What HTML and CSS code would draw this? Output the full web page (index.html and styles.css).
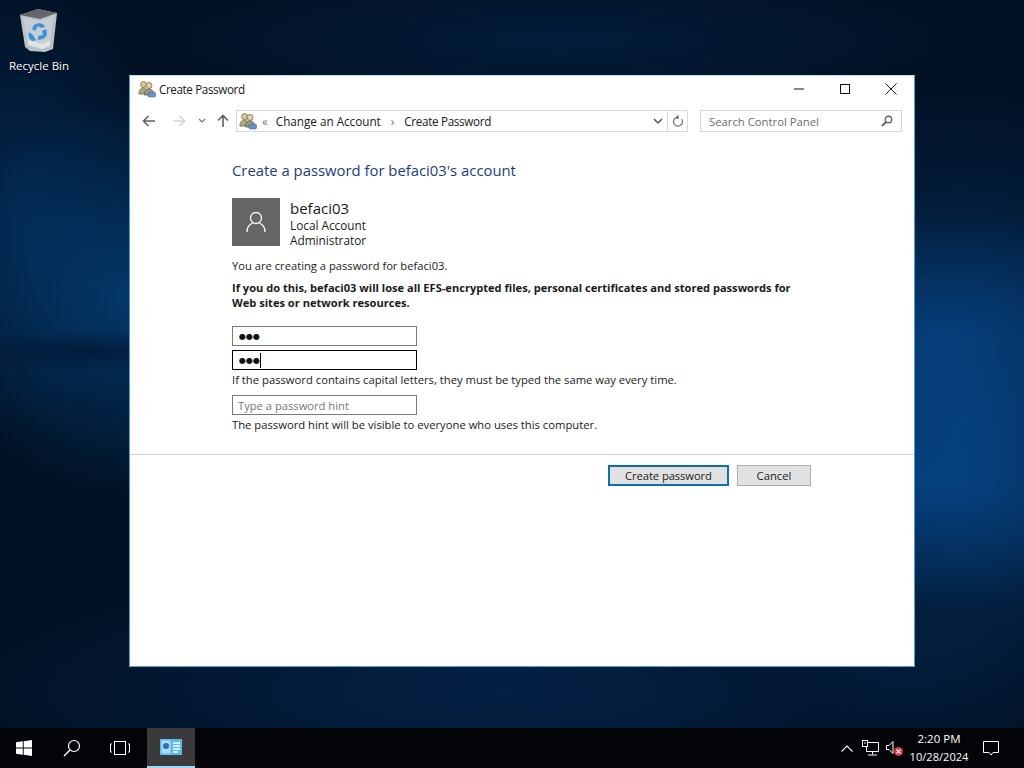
FILE: index.html
```html
<!DOCTYPE html>
<html lang="en">
<head>
<meta charset="utf-8">
<title>Create Password</title>
<link rel="stylesheet" href="styles.css">
</head>
<body>
<svg class="defs" width="0" height="0" aria-hidden="true">
  <symbol id="users" viewBox="0 0 18 18">
    <circle cx="5.500" cy="4.500" r="3" fill="#d8c9a0" stroke="#7d6a3a" stroke-width=".8"/>
    <path d="M1 14c0-4 1.500-6 4.500-6s4.500 2 4.500 6z" fill="#a5ab7c" stroke="#6a6a44" stroke-width=".8"/>
    <circle cx="11" cy="5.500" r="3" fill="#e4cfa4" stroke="#7d6a3a" stroke-width=".8"/>
    <path d="M6.500 15c0-4 1.500-6 4.500-6s4.500 2 4.500 6z" fill="#9a9b88" stroke="#55553f" stroke-width=".8"/>
    <rect x="10" y="12" width="7.500" height="5" rx="1.500" fill="#6f8fc0" stroke="#47659a" stroke-width=".6"/>
  </symbol>
</svg>
<main class="desktop">
  <div class="desk-icon">
    <svg class="bin" width="42" height="46" viewBox="0 0 42 46">
      <path d="M2 7 20 1 39 5 35 41 27 44 12 43 7 39z" fill="#b9c0c6"/>
      <path d="M2 7 20 1 39 5 22 11z" fill="#62676b"/>
      <path d="M5 9 22 13 35 8 32 38 24 41 10 37z" fill="#c6ced4"/>
      <path d="M16 17c5-3 10-2 11 2l-4 1-3-2-3 5-3-2zM11 24l4 3 3 5-3 1c-4-1-5-5-4-9zM28 21c2 4 1 8-3 10l-5 1v-4l5-1-1-4z" fill="#3a92dc"/>
      <path d="M10 32 24 36 32 33 32 38 24 41 10 37z" fill="#fff" opacity=".45"/>
    </svg>
    <span class="desk-label">Recycle Bin</span>
  </div>

  <section class="window">
    <header class="titlebar">
      <svg class="title-icon" width="18" height="18"><use href="#users"/></svg>
      <span class="title-text">Create Password</span>
      <div class="win-controls">
        <span class="win-btn"><svg width="12" height="12" viewBox="0 0 12 12"><path d="M1 6h10" stroke="#111" stroke-width="1"/></svg></span>
        <span class="win-btn"><svg width="12" height="12" viewBox="0 0 12 12"><rect x="1.500" y="1.500" width="9" height="9" fill="none" stroke="#111"/></svg></span>
        <span class="win-btn"><svg width="12" height="12" viewBox="0 0 12 12"><path d="M.5.5l11 11M11.500.5l-11 11" stroke="#111" fill="none"/></svg></span>
      </div>
    </header>

    <nav class="toolbar">
      <svg class="nav-back" width="14" height="12" viewBox="0 0 14 12"><path d="M13 6H2M6.500 1 1.500 6l5 5" fill="none" stroke="#5f5f5f" stroke-width="1.600"/></svg>
      <svg class="nav-fwd" width="14" height="12" viewBox="0 0 14 12"><path d="M1 6h11M7.500 1l5 5-5 5" fill="none" stroke="#d4d4d4" stroke-width="1.600"/></svg>
      <svg class="nav-drop" width="8" height="6" viewBox="0 0 8 6"><path d="M1 1l3 3 3-3" fill="none" stroke="#777" stroke-width="1.200"/></svg>
      <svg class="nav-up" width="12" height="14" viewBox="0 0 12 14"><path d="M6 13V2M1 6.500l5-5 5 5" fill="none" stroke="#5f5f5f" stroke-width="1.600"/></svg>
      <div class="address">
        <svg class="addr-icon" width="18" height="18"><use href="#users"/></svg>
        <span class="chev">«</span>
        <span class="crumb">Change an Account</span>
        <span class="sep">›</span>
        <span class="crumb crumb-last">Create Password</span>
        <svg class="addr-drop" width="10" height="7" viewBox="0 0 10 7"><path d="M1 1l4 4 4-4" fill="none" stroke="#555" stroke-width="1.500"/></svg>
        <span class="refresh"><svg width="12" height="13" viewBox="0 0 12 13"><path d="M9.700 4a4.500 4.500 0 1 1-2.700-1.800H4.500M6.500 .5l-2 1.700 2 1.700" fill="none" stroke="#666" stroke-width="1.100"/></svg></span>
      </div>
      <div class="search">
        <span class="search-text">Search Control Panel</span>
        <svg width="12" height="12" viewBox="0 0 12 12"><circle cx="7.500" cy="4.500" r="3.200" fill="none" stroke="#666" stroke-width="1.400"/><path d="M5 7 1 11" stroke="#666" stroke-width="2"/></svg>
      </div>
    </nav>

    <div class="content">
      <h1 class="heading">Create a password for befaci03's account</h1>
      <div class="account">
        <div class="avatar">
          <svg width="20" height="22" viewBox="0 0 20 22"><circle cx="10" cy="7" r="5.500" fill="none" stroke="#fff" stroke-width="1.300"/><path d="M1 21c0-5 3-8 6-9M19 21c0-5-3-8-6-9" fill="none" stroke="#fff" stroke-width="1.300"/></svg>
        </div>
        <div class="acc-info">
          <div class="acc-name">befaci03</div>
          <div class="acc-line">Local Account</div>
          <div class="acc-line">Administrator</div>
        </div>
      </div>
      <p class="intro">You are creating a password for befaci03.</p>
      <p class="warn">If you do this, befaci03 will lose all EFS-encrypted files, personal certificates and stored passwords for Web sites or network resources.</p>
      <div class="field first"><span class="dots">●●●</span></div>
      <div class="field focus"><span class="dots">●●●</span><span class="caret"></span></div>
      <p class="note">If the password contains capital letters, they must be typed the same way every time.</p>
      <div class="field hint">Type a password hint</div>
      <p class="note">The password hint will be visible to everyone who uses this computer.</p>
    </div>
    <div class="actions">
      <button class="btn primary">Create password</button>
      <button class="btn">Cancel</button>
    </div>
  </section>
</main>

<footer class="taskbar">
  <span class="tb-item">
    <svg width="16" height="16" viewBox="0 0 16 16"><path d="M0 2.300 6.800 1.300V7.600H0zM7.700 1.200 16 0V7.600H7.700zM0 8.400H6.800V14.700L0 13.700zM7.700 8.400H16V16L7.700 14.800z" fill="#fff"/></svg>
  </span>
  <span class="tb-item">
    <svg width="18" height="18" viewBox="0 0 18 18"><circle cx="11" cy="7" r="5.500" fill="none" stroke="#fff" stroke-width="1.200"/><path d="M7 11 1 17" stroke="#fff" stroke-width="1.400"/></svg>
  </span>
  <span class="tb-item">
    <svg width="20" height="14" viewBox="0 0 20 14"><rect x="4.500" y=".5" width="11" height="13" fill="none" stroke="#fff"/><path d="M2 3H.5v8H2M18 3h1.500v8H18" fill="none" stroke="#fff"/></svg>
  </span>
  <span class="tb-item active">
    <svg width="22" height="16" viewBox="0 0 22 16"><rect width="22" height="16" fill="#5cb8ee"/><rect x="1.500" y="1.500" width="9" height="13" fill="#a9dcf7"/><circle cx="6" cy="7" r="3" fill="#2f6fa8"/><path d="M13 4h7M13 7h7M13 10h7M13 13h5" stroke="#fff" stroke-width="1.300"/></svg>
  </span>
  <div class="tray">
    <svg class="tray-up" width="12" height="7" viewBox="0 0 12 7"><path d="M.5 6.500 6 1l5.500 5.500" fill="none" stroke="#fff" stroke-width="1.100"/></svg>
    <svg class="tray-net" width="17" height="16" viewBox="0 0 17 16"><path d="M4.500 2.500h12v9h-12zM10.500 11.500v3M6 15h9" fill="none" stroke="#fff"/><rect x=".5" y=".5" width="5" height="6" fill="#000" stroke="#fff"/><path d="M2 3h2" stroke="#fff"/></svg>
    <span class="tray-vol">
      <svg width="18" height="17" viewBox="0 0 18 17"><path d="M.5 5.500h2.500L7 1.500v12l-4-4H.5z" fill="none" stroke="#fff"/><circle cx="12.500" cy="11.500" r="4.500" fill="#e0303f"/><path d="M10.500 9.500l4 4M14.500 9.500l-4 4" stroke="#fff" stroke-width="1.100"/></svg>
    </span>
    <div class="clock"><span>2:20 PM</span><span class="clock-date">10/28/2024</span></div>
    <svg class="tray-note" width="16" height="15" viewBox="0 0 16 15"><path d="M.5.5h15v11H10l-2 2.500-2-2.500H.5z" fill="none" stroke="#fff"/></svg>
  </div>
</footer>
</body>
</html>
```
FILE: styles.css
```css
* { box-sizing: border-box; }
html, body { margin: 0; height: 100%; overflow: hidden; }
body {
  display: flex;
  flex-direction: column;
  width: 1024px;
  height: 768px;
  font-family: "Open Sans", "Noto Sans", sans-serif;
  font-size: 11.25px;
  color: #1a1a1a;
  background: #000;
}
.defs { position: absolute; }
.desktop {
  position: relative;
  flex: 1;
  background:
    radial-gradient(ellipse 170px 22px at 90px 352px, rgba(1,18,42,.6), rgba(1,18,42,0) 100%),
    radial-gradient(ellipse 220px 200px at 140px 300px, rgba(4,72,135,.7), rgba(4,72,135,0) 100%),
    radial-gradient(ellipse 150px 220px at 20px 200px, rgba(3,52,104,.55), rgba(3,52,104,0) 100%),
    radial-gradient(ellipse 300px 130px at 940px 340px, rgba(8,86,165,.5), rgba(8,86,165,0) 100%),
    radial-gradient(ellipse 300px 130px at 940px 480px, rgba(8,86,165,.55), rgba(8,86,165,0) 100%),
    radial-gradient(ellipse 260px 340px at 960px 420px, rgba(5,60,120,.7), rgba(5,60,120,0) 100%),
    radial-gradient(ellipse 560px 130px at 500px 690px, rgba(6,52,110,.45), rgba(6,52,110,0) 100%),
    radial-gradient(ellipse 420px 70px at 560px 40px, rgba(5,50,100,.35), rgba(5,50,100,0) 100%),
    #021124;
}
.desk-icon {
  position: absolute;
  left: 0;
  top: 8px;
  width: 78px;
  display: flex;
  flex-direction: column;
  align-items: center;
}
.bin { margin-bottom: 4px; margin-right: 1px; }
.desk-label { color: #fff; font-size: 11.5px; line-height: 16px; text-shadow: 0 1px 2px #000; }

.window {
  position: absolute;
  left: 129px;
  top: 75px;
  width: 786px;
  height: 592px;
  background: #fff;
  border: 1px solid #4a9fc9;
  border-top-color: #bfe6f7;
  display: flex;
  flex-direction: column;
}
.titlebar {
  height: 26px;
  display: flex;
  align-items: center;
  padding-left: 8px;
  flex: none;
}
.title-icon { margin-right: 3px; }
.title-text { font-size: 11.7px; letter-spacing: -.4px; }
.win-controls { margin-left: auto; display: flex; }
.win-btn { width: 46px; height: 26px; display: flex; align-items: center; justify-content: center; }

.toolbar {
  height: 34px;
  padding: 4px 0 0 12px;
  flex: none;
  display: flex;
  align-items: center;
}
.nav-back { margin-right: 16px; }
.nav-fwd { margin-right: 12px; }
.nav-drop { margin-right: 11px; }
.nav-up { margin-right: 7px; }
.address {
  width: 452px;
  height: 22px;
  border: 1px solid #d9d9d9;
  display: flex;
  align-items: center;
  padding-left: 2px;
  font-size: 11.7px;
}
.addr-icon { margin-right: 5px; flex: none; }
.chev { color: #777; margin-right: 8px; }
.sep { color: #777; margin: 0 10px; }
.crumb { white-space: nowrap; }
.crumb-last { letter-spacing: -.33px; }
.addr-drop { margin-left: auto; margin-right: 4px; }
.refresh {
  width: 20px;
  height: 20px;
  border-left: 1px solid #d9d9d9;
  display: flex;
  align-items: center;
  justify-content: center;
}
.search {
  width: 202px;
  height: 22px;
  margin-left: 12px;
  border: 1px solid #d9d9d9;
  display: flex;
  align-items: center;
  justify-content: space-between;
  padding: 0 8px;
  color: #6d6d6d;
  font-size: 11.3px;
}

.content { padding: 24px 0 0 102px; width: 670px; flex: none; }
.heading {
  margin: 0 0 18px;
  font-size: 14.85px;
  font-weight: 400;
  line-height: 20px;
  color: #1a3e78;
}
.account { display: flex; gap: 10px; height: 48px; }
.avatar {
  width: 48px;
  height: 48px;
  background: #666;
  display: flex;
  align-items: center;
  justify-content: center;
}
.acc-name { font-size: 15px; line-height: 20px; }
.acc-line { line-height: 15px; font-size: 11.8px; }
.intro { margin: 12px 0 7px; line-height: 15px; font-size: 11.2px; }
.warn { margin: 0 0 16px; font-weight: 700; line-height: 15px; font-size: 11.1px; }
.field {
  width: 185px;
  height: 20px;
  border: 1px solid #7a7a7a;
  padding-left: 6px;
  display: flex;
  align-items: center;
}
.field.first { margin-bottom: 4px; }
.field.focus { border-color: #000; }
.dots { font-size: 8px; color: #111; font-family: "DejaVu Sans", sans-serif; }
.caret { width: 1px; height: 15px; background: #000; }
.field.hint { color: #777; margin-top: 7px; padding-left: 5px; font-size: 11.2px; }
.note { margin: 2px 0 0; line-height: 16px; }
.actions {
  margin-top: 21px;
  border-top: 1px solid #d0d0d0;
  padding: 10px 103px 0 0;
  display: flex;
  justify-content: flex-end;
  gap: 8px;
}
.btn {
  font: inherit;
  color: #1a1a1a;
  width: 74px;
  height: 21px;
  padding: 0;
  background: #e1e1e1;
  border: 1px solid #adadad;
}
.btn.primary { width: 121px; border: 2px solid #0f6fa8; letter-spacing: -.1px; }

.taskbar {
  height: 40px;
  flex: none;
  background: #020408;
  display: flex;
  color: #fff;
}
.tb-item { width: 48px; height: 40px; display: flex; align-items: center; justify-content: center; }
.tb-item.active { margin-left: 3px; background: #3a3a3a; border-bottom: 2px solid #9fd4f2; }
.tray { margin-left: auto; display: flex; align-items: center; height: 40px; }
.tray-up { margin-right: 9px; }
.tray-net { margin-right: 7px; }
.tray-vol { display: flex; margin-right: 4px; margin-top: 1px; }
.clock {
  display: flex;
  flex-direction: column;
  align-items: center;
  width: 62px;
  font-size: 11.5px;
  line-height: 18px;
}
.clock-date { font-size: 11.1px; }
.tray-note { margin: 0 25px 0 13px; }
```
